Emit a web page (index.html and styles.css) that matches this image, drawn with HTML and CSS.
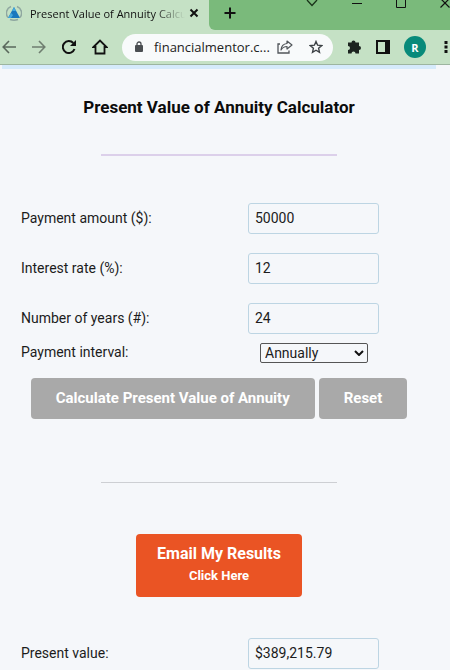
FILE: index.html
```html
<!DOCTYPE html>
<html lang="en">
<head>
<meta charset="UTF-8">
<meta name="viewport" content="width=device-width, initial-scale=1.0">
<title>Present Value of Annuity Calculator</title>
<link rel="stylesheet" href="styles.css">
</head>
<body>

<!-- Browser window -->
<header class="browser">
  <div class="tab-bar">
    <div class="tab">
      <svg class="favicon" width="16" height="16" viewBox="0 0 16 16">
        <path d="M5 1.5A7 7 0 0 0 2 12.500M11 1.500A7 7 0 0 1 14 12.500M4 14.500Q8 16 12 14.500" fill="none" stroke="#8fa7a0" stroke-width="1.500"/>
        <path d="M8 2L14 13H2Z" fill="#1a78bd"/>
        <path d="M8 2L10 6H6ZM2 13L5 8L7 10L5 13Z" fill="#45a8dc"/>
      </svg>
      <span class="tab-title">Present Value of Annuity Calcu</span>
      <button class="icon-button" aria-label="Close tab">
        <svg width="10" height="10" viewBox="0 0 10 10"><path d="M1.500 1.500L8.500 8.500M8.500 1.500L1.500 8.500" stroke="#111" stroke-width="2"/></svg>
      </button>
    </div>
    <div class="tab-rest">
      <button class="icon-button new-tab" aria-label="New tab">
        <svg width="12" height="12" viewBox="0 0 12 12"><path d="M6 0.500V11.500M0.500 6H11.500" stroke="#111" stroke-width="2"/></svg>
      </button>
      <div class="window-buttons">
        <button class="icon-button" aria-label="Search tabs">
          <svg width="12" height="8" viewBox="0 0 12 8"><path d="M1 0L6 5.500L11 0" fill="none" stroke="#1a331a" stroke-width="1.300"/></svg>
        </button>
        <button class="icon-button" aria-label="Minimize">
          <svg width="10" height="8" viewBox="0 0 10 8"><path d="M0 3.500H10" stroke="#111" stroke-width="1"/></svg>
        </button>
        <button class="icon-button" aria-label="Maximize">
          <svg width="10" height="8" viewBox="0 0 10 8"><path d="M0.500 0V7.500H9.500V0" fill="none" stroke="#111" stroke-width="1"/></svg>
        </button>
        <button class="icon-button" aria-label="Close">
          <svg width="10" height="8" viewBox="0 0 10 8"><path d="M0.500 -1.500L9.500 7.500M9.500 -1.500L0.500 7.500" stroke="#111" stroke-width="1.200"/></svg>
        </button>
      </div>
    </div>
  </div>

  <nav class="toolbar">
    <div class="nav-buttons">
      <button class="icon-button" aria-label="Back">
        <svg width="14" height="14" viewBox="0 0 14 14"><path d="M14 7H1.500M7 1L1.200 7L7 13" fill="none" stroke="#5a685c" stroke-width="1.600"/></svg>
      </button>
      <button class="icon-button" aria-label="Forward">
        <svg width="14" height="14" viewBox="0 0 14 14"><path d="M0 7H12.500M7 1L12.800 7L7 13" fill="none" stroke="#6f7e70" stroke-width="1.600"/></svg>
      </button>
      <button class="icon-button" aria-label="Reload">
        <svg width="14" height="14" viewBox="0 0 14 14"><path d="M12.500 9A6 6 0 1 1 11.300 3" fill="none" stroke="#111" stroke-width="2"/><path d="M14 0V6H8Z" fill="#111"/></svg>
      </button>
      <button class="icon-button" aria-label="Home">
        <svg width="16" height="16" viewBox="0 0 16 16"><path d="M1.500 8L8 1.500L14.500 8H12.500V14.500H3.500V8Z" fill="none" stroke="#111" stroke-width="1.800"/></svg>
      </button>
    </div>
    <div class="address">
      <svg width="8" height="12" viewBox="0 0 8 12"><path d="M2 5V3A2 2 0 0 1 6 3V5" fill="none" stroke="#4a4e52" stroke-width="1.300"/><rect y="4" width="8" height="7" rx="1" fill="#4a4e52"/></svg>
      <span class="url">financialmentor.c...</span>
      <button class="icon-button" aria-label="Share">
        <svg width="16" height="14" viewBox="0 0 16 14"><path d="M3 4H1V13H12V10.500" fill="none" stroke="#50555a" stroke-width="1.300"/><path d="M10 1L15 5L10 9V6.500Q6 6.500 4 10Q4.500 4 10 3.500Z" fill="none" stroke="#50555a" stroke-width="1.200" stroke-linejoin="round"/></svg>
      </button>
      <button class="icon-button bookmark" aria-label="Bookmark">
        <svg width="14" height="14" viewBox="0 0 14 14"><path d="M7 1.500L8.600 5.200L12.700 5.600L9.600 8.300L10.500 12.300L7 10.200L3.500 12.300L4.400 8.300L1.300 5.600L5.400 5.200Z" fill="none" stroke="#3c4145" stroke-width="1.400"/></svg>
      </button>
    </div>
    <div class="extensions">
      <button class="icon-button" aria-label="Extensions">
        <svg width="16" height="16" viewBox="0 0 16 16"><path d="M2 3.500H5.500A2 2 0 1 1 9.500 3.500H13V7A2 2 0 1 1 13 11V14.500H9.500A2 2 0 0 0 5.500 14.500H2V11A2 2 0 0 0 2 7Z" fill="#1c2420"/></svg>
      </button>
      <button class="icon-button" aria-label="Side panel">
        <svg width="14" height="14" viewBox="0 0 14 14"><path d="M1 1H13V13H1Z" fill="none" stroke="#111" stroke-width="2"/><path d="M9 1H13V13H9Z" fill="#111"/></svg>
      </button>
      <button class="avatar" aria-label="Profile">R</button>
      <button class="icon-button menu" aria-label="Menu">
        <svg width="4" height="14" viewBox="0 0 4 14"><path d="M0.500 1H3.500V4H0.500ZM0.500 5.500H3.500V8.500H0.500ZM0.500 10H3.500V13H0.500Z" fill="#111"/></svg>
      </button>
    </div>
  </nav>
</header>

<!-- Calculator -->
<main class="page">
  <div class="strip"></div>
  <h1>Present Value of Annuity Calculator</h1>
  <hr class="divider purple">

  <form class="calculator">
    <div class="field">
      <label for="payment">Payment amount ($):</label>
      <input type="text" id="payment" value="50000">
    </div>
    <div class="field">
      <label for="rate">Interest rate (%):</label>
      <input type="text" id="rate" value="12">
    </div>
    <div class="field">
      <label for="years">Number of years (#):</label>
      <input type="text" id="years" value="24">
    </div>
    <div class="field interval">
      <label for="interval">Payment interval:</label>
      <div class="select-wrap">
        <select id="interval">
          <option selected>Annually</option>
          <option>Monthly</option>
        </select>
        <svg class="chevron" width="10" height="6" viewBox="0 0 10 6"><path d="M1 1L5 5L9 1" fill="none" stroke="#111" stroke-width="2"/></svg>
      </div>
    </div>

    <div class="actions">
      <button type="button" class="btn">Calculate Present Value of Annuity</button>
      <button type="reset" class="btn">Reset</button>
    </div>

    <hr class="divider">

    <button type="button" class="email">
      Email My Results
      <span>Click Here</span>
    </button>

    <div class="field">
      <label for="result">Present value:</label>
      <input type="text" id="result" value="$389,215.79" readonly>
    </div>
  </form>
</main>

</body>
</html>
```

FILE: styles.css
```css
* {
  box-sizing: border-box;
}

body {
  margin: 0;
  background-color: #f5f7fa;
  font-family: Roboto, Arial, sans-serif;
  font-size: 14px;
  color: #1c1c1c;
}

button, input, select {
  font-family: inherit;
}

/* Browser window */
.browser {
  background-color: #c5e1c5;
  border-bottom: 1px solid #9db5a0;
  font-family: "Open Sans", sans-serif;
}

.icon-button {
  display: flex;
  flex-shrink: 0;
  padding: 0;
  border: 0;
  background: none;
}

.tab-bar {
  display: flex;
  height: 30px;
}

.tab {
  display: flex;
  align-items: center;
  width: 209px;
  padding: 0 10px 4px 6px;
}

.tab-rest {
  display: flex;
  flex: 1;
  background-color: #7aba7b;
  border-bottom-left-radius: 6px;
}

.favicon {
  flex-shrink: 0;
}

.tab-title {
  flex: 1;
  margin: 0 4px 0 8px;
  overflow: hidden;
  white-space: nowrap;
  font-size: 11px;
  color: #111;
  -webkit-mask-image: linear-gradient(to right, #000 80%, transparent);
  mask-image: linear-gradient(to right, #000 80%, transparent);
}

.new-tab {
  align-items: center;
  padding: 0 0 4px 15px;
}

.window-buttons {
  display: flex;
  align-items: flex-start;
  gap: 34px;
  margin-left: auto;
}

/* Toolbar */
.toolbar {
  display: flex;
  align-items: center;
  height: 34px;
  padding: 0 2px;
}

.nav-buttons {
  display: flex;
  align-items: center;
  gap: 16px;
  margin-right: 14px;
}

.address {
  display: flex;
  flex: 1;
  align-items: center;
  height: 27px;
  padding: 0 10px 0 13px;
  background-color: #f8fafb;
  border-radius: 14px;
}

.url {
  flex: 1;
  margin-left: 11px;
  white-space: nowrap;
  font-size: 13px;
  color: #222;
}

.bookmark {
  margin-left: 16px;
}

.extensions {
  display: flex;
  align-items: center;
  gap: 14px;
  margin-left: 13px;
}

.avatar {
  width: 22px;
  height: 22px;
  padding: 0;
  border: 0;
  border-radius: 50%;
  background-color: #088a7a;
  font-size: 11px;
  font-weight: bold;
  color: white;
}

.menu {
  margin-left: 4px;
}

/* Page */
.page {
  padding: 0 12px 0 0;
}

.strip {
  height: 4px;
  margin: 0 2px;
  background-color: #d5eafb;
}

h1 {
  margin: 27px 0 36px;
  font-size: 17px;
  font-weight: bold;
  line-height: 22px;
  text-align: center;
  color: #0c0c0c;
}

.divider {
  width: 54%;
  height: 1px;
  margin: 0 auto;
  border: 0;
  background-color: #cdcfd3;
}

.divider.purple {
  height: 2px;
  background-color: #dcd0ea;
}

/* Calculator fields */
.calculator {
  padding-top: 47px;
}

.field {
  display: flex;
  align-items: center;
  justify-content: space-between;
  margin-bottom: 19px;
  padding: 0 59px 0 21px;
}

.field label {
  padding-bottom: 2px;
}

.field input {
  width: 131px;
  height: 31px;
  padding: 0 6px 2px;
  border: 1px solid #bdd5e3;
  border-radius: 3px;
  background-color: #f5f7fa;
  font-size: 14px;
  color: #1c1c1c;
}

.field.interval {
  margin-top: -10px;
  margin-bottom: 15px;
  padding-right: 70px;
}

.select-wrap {
  position: relative;
  width: 108px;
}

select {
  display: block;
  width: 100%;
  height: 20px;
  padding: 0 4px;
  border: 1px solid #555;
  border-radius: 2px;
  background-color: #f5f7fa;
  font-size: 14px;
  color: #1c1c1c;
  appearance: none;
}

.chevron {
  position: absolute;
  top: 7px;
  right: 4px;
  pointer-events: none;
}

/* Buttons */
.actions {
  display: flex;
  justify-content: center;
  gap: 4px;
  margin-bottom: 63px;
}

.btn {
  height: 41px;
  padding: 0 25px 2px;
  border: 0;
  border-radius: 4px;
  background-color: #a9a9a9;
  font-size: 15px;
  font-weight: bold;
  color: white;
}

.email {
  display: block;
  margin: 51px auto 41px;
  padding: 9px 21px 10px;
  border: 0;
  border-radius: 4px;
  background-color: #ea5424;
  font-size: 16px;
  font-weight: bold;
  line-height: 22px;
  color: white;
}

.email span {
  display: block;
  font-size: 13px;
}
```
